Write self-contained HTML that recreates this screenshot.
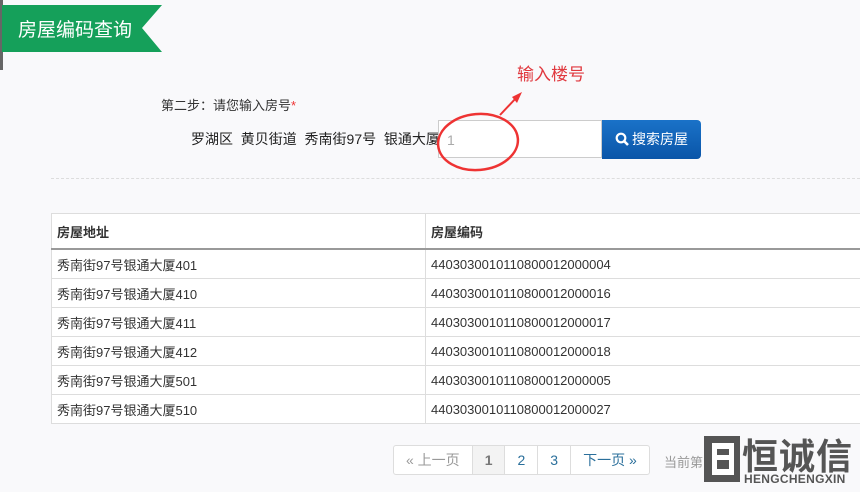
<!DOCTYPE html>
<html><head><meta charset="utf-8"><style>
body{margin:0;width:860px;height:492px;background:#f9f9fb;font-family:"Liberation Sans","Noto Sans CJK SC",sans-serif;position:relative;overflow:hidden;color:#333}
.a{position:absolute}
table{border-collapse:collapse;font-size:13px}
td,th{height:28px;border:1px solid #ddd;padding:0 5px;text-align:left;background:#fff}
th{height:34px;border-bottom:2px solid #999;font-weight:bold;background:#fff}
.pg{display:flex;border:1px solid #ddd;border-radius:3px;background:#fff;height:28px;font-size:14px}
.pg div{border-right:1px solid #ddd;padding:0 12px;line-height:28px;color:#2a6f9b}
</style></head><body>
<div class="a" style="left:0;top:0;width:3px;height:70px;background:#666"></div>
<svg class="a" style="left:0;top:4" width="165" height="50"><polygon points="2,1 162,1 142,24 162,48 2,48" fill="#15a05a"/></svg>
<div class="a" style="left:18px;top:15px;color:#fff;font-size:19px">房屋编码查询</div>
<div class="a" style="left:161px;top:95px;font-size:13px">第二步：请您输入房号<span style="color:#e33">*</span></div>
<div class="a" style="left:191px;top:129px;font-size:14px;color:#222">罗湖区&nbsp; 黄贝街道&nbsp; 秀南街97号&nbsp; 银通大厦</div>
<div class="a" style="left:517px;top:60px;color:#e0383e;font-size:17px">输入楼号</div>
<div class="a" style="left:438px;top:120px;width:164px;height:38px;background:#fff;border:1px solid #ccc;box-sizing:border-box;color:#aaa;font-size:14px;padding:11px 8px">1</div>
<div class="a" style="left:602px;top:120px;width:99px;height:39px;background:linear-gradient(#1a72c8,#0a55a8);border-radius:0 4px 4px 0;color:#fff;font-size:14px;line-height:39px;text-align:center"><svg width="14" height="14" style="vertical-align:-2px;margin-right:3px"><circle cx="6" cy="6" r="4.3" fill="none" stroke="#fff" stroke-width="2.2"/><line x1="9" y1="9" x2="13" y2="13" stroke="#fff" stroke-width="2.6"/></svg>搜索房屋</div>
<svg class="a" style="left:420px;top:85px" width="120" height="95"><ellipse cx="58" cy="57" rx="40" ry="28" fill="none" stroke="#e33" stroke-width="2.5" transform="rotate(-5 58 57)"/><line x1="80" y1="30" x2="97" y2="12" stroke="#e33" stroke-width="2"/><polygon points="102,7 92,12 97,18" fill="#e33"/></svg>
<div class="a" style="left:51px;top:178px;width:809px;border-top:1px dashed #ddd"></div>
<table class="a" style="left:51px;top:213px;width:830px">
<tr><th style="width:363px">房屋地址</th><th>房屋编码</th></tr>
<tr><td>秀南街97号银通大厦401</td><td>4403030010110800012000004</td></tr>
<tr><td>秀南街97号银通大厦410</td><td>4403030010110800012000016</td></tr>
<tr><td>秀南街97号银通大厦411</td><td>4403030010110800012000017</td></tr>
<tr><td>秀南街97号银通大厦412</td><td>4403030010110800012000018</td></tr>
<tr><td>秀南街97号银通大厦501</td><td>4403030010110800012000005</td></tr>
<tr><td>秀南街97号银通大厦510</td><td>4403030010110800012000027</td></tr>
</table>
<div class="a pg" style="left:393px;top:445px"><div style="color:#999">« 上一页</div><div style="color:#777;background:#f3f3f3;font-weight:bold">1</div><div>2</div><div>3</div><div style="border:0">下一页 »</div></div>
<div class="a" style="left:664px;top:452px;font-size:13px;color:#999">当前第</div>
<svg class="a" style="left:704px;top:436px" width="36" height="46"><rect x="0" y="0" width="36" height="46" fill="#555"/><rect x="8" y="7" width="22" height="32" fill="#fff"/><rect x="13" y="13" width="12" height="6" fill="#555"/><rect x="13" y="24" width="12" height="9" fill="#555"/></svg>
<div class="a" style="left:742px;top:428px;font-size:36px;font-weight:bold;color:#555;letter-spacing:1px">恒诚信</div>
<div class="a" style="left:744px;top:472px;font-size:12px;font-weight:bold;color:#555;letter-spacing:0.3px">HENGCHENGXIN</div>
</body></html>
